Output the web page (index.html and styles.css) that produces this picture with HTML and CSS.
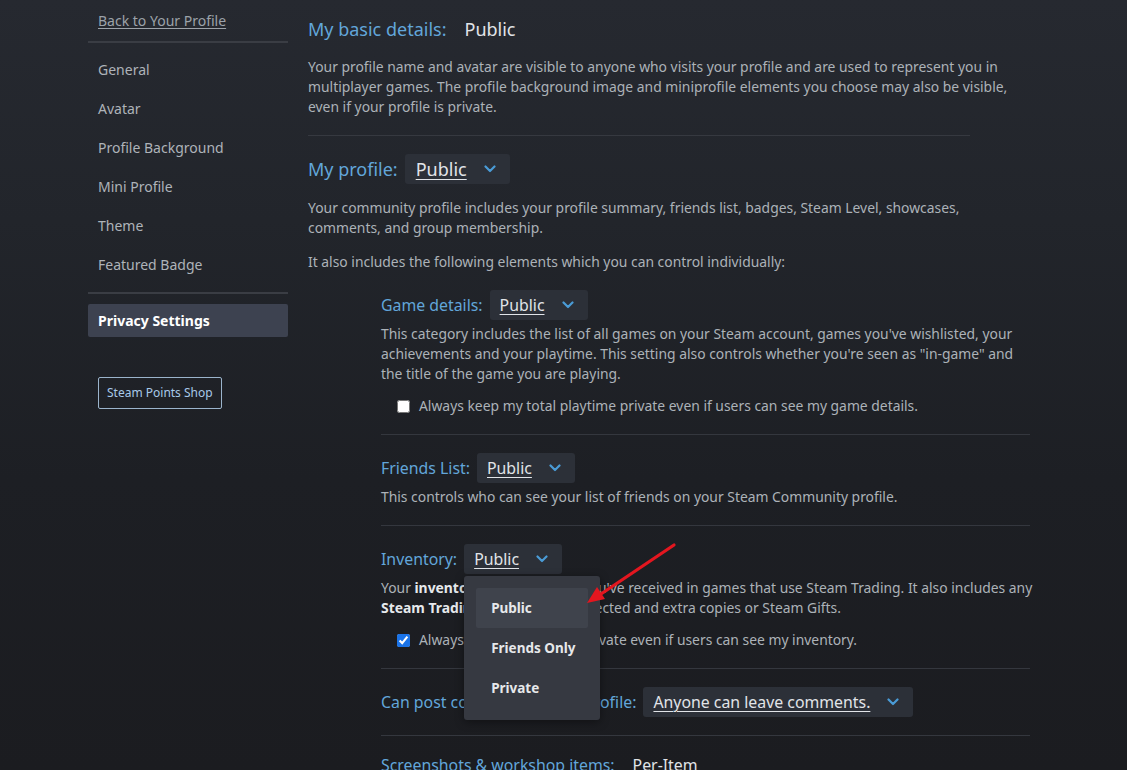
FILE: index.html
```html
<!DOCTYPE html>
<html lang="en">
<head>
<meta charset="utf-8">
<title>Privacy Settings</title>
<link rel="stylesheet" href="styles.css">
</head>
<body>
<div class="page">
  <aside class="sidebar">
    <a class="back-link" href="#">Back to Your Profile</a>
    <nav class="nav">
      <div class="nav-item">General</div>
      <div class="nav-item">Avatar</div>
      <div class="nav-item">Profile Background</div>
      <div class="nav-item">Mini Profile</div>
      <div class="nav-item">Theme</div>
      <div class="nav-item">Featured Badge</div>
    </nav>
    <div class="nav-active">Privacy Settings</div>
    <div class="shop-btn">Steam Points Shop</div>
  </aside>

  <main class="main">
    <div class="top-section">
      <div class="row head-row">
        <span class="label big">My basic details:</span>
        <span class="value big">Public</span>
      </div>
      <p class="desc">Your profile name and avatar are visible to anyone who visits your profile and are used to represent you in<br>multiplayer games. The profile background image and miniprofile elements you choose may also be visible,<br>even if your profile is private.</p>
    </div>

    <div class="profile-section">
      <div class="row">
        <span class="label big">My profile:</span>
        <span class="dropdown big"><span class="dd-text">Public</span><svg class="chev" viewBox="0 0 12 8" width="12" height="8"><path d="M1.5 1.5 L6 6 L10.5 1.5" fill="none" stroke="#4a9bd6" stroke-width="2.2" stroke-linecap="round" stroke-linejoin="round"/></svg></span>
      </div>
      <p class="desc gap14">Your community profile includes your profile summary, friends list, badges, Steam Level, showcases,<br>comments, and group membership.</p>
      <p class="desc gap14">It also includes the following elements which you can control individually:</p>

      <div class="subs">
        <div class="sub first">
          <div class="row">
            <span class="label">Game details:</span>
            <span class="dropdown"><span class="dd-text">Public</span><svg class="chev" viewBox="0 0 12 8" width="12" height="8"><path d="M1.5 1.5 L6 6 L10.5 1.5" fill="none" stroke="#4a9bd6" stroke-width="2.2" stroke-linecap="round" stroke-linejoin="round"/></svg></span>
          </div>
          <p class="desc gap4">This category includes the list of all games on your Steam account, games you've wishlisted, your<br>achievements and your playtime. This setting also controls whether you're seen as "in-game" and<br>the title of the game you are playing.</p>
          <label class="check"><input type="checkbox"><span>Always keep my total playtime private even if users can see my game details.</span></label>
        </div>

        <div class="sub">
          <div class="row">
            <span class="label">Friends List:</span>
            <span class="dropdown"><span class="dd-text">Public</span><svg class="chev" viewBox="0 0 12 8" width="12" height="8"><path d="M1.5 1.5 L6 6 L10.5 1.5" fill="none" stroke="#4a9bd6" stroke-width="2.2" stroke-linecap="round" stroke-linejoin="round"/></svg></span>
          </div>
          <p class="desc gap4">This controls who can see your list of friends on your Steam Community profile.</p>
        </div>

        <div class="sub">
          <div class="row">
            <span class="label">Inventory:</span>
            <span class="dropdown has-menu"><span class="dd-text">Public</span><svg class="chev" viewBox="0 0 12 8" width="12" height="8"><path d="M1.5 1.5 L6 6 L10.5 1.5" fill="none" stroke="#4a9bd6" stroke-width="2.2" stroke-linecap="round" stroke-linejoin="round"/></svg>
              <span class="menu">
                <span class="menu-item hover">Public</span>
                <span class="menu-item">Friends Only</span>
                <span class="menu-item">Private</span>
              </span>
            </span>
          </div>
          <p class="desc gap4">Your <b>inventory</b> includes items you've received in games that use Steam Trading. It also includes any<br><b>Steam Trading Cards</b> you've collected and extra copies or Steam Gifts.</p>
          <label class="check"><input type="checkbox" checked><span>Always keep Steam Gifts private even if users can see my inventory.</span></label>
        </div>

        <div class="sub">
          <div class="row">
            <span class="label">Can post comments on my profile:</span>
            <span class="dropdown"><span class="dd-text">Anyone can leave comments.</span><svg class="chev" viewBox="0 0 12 8" width="12" height="8"><path d="M1.5 1.5 L6 6 L10.5 1.5" fill="none" stroke="#4a9bd6" stroke-width="2.2" stroke-linecap="round" stroke-linejoin="round"/></svg></span>
          </div>
        </div>

        <div class="sub last">
          <div class="row">
            <span class="label">Screenshots &amp; workshop items:</span>
            <span class="value">Per-Item</span>
          </div>
        </div>
      </div>
    </div>
  </main>
</div>

<svg class="arrow" width="120" height="80" viewBox="0 0 120 80">
  <line x1="102" y1="5" x2="26" y2="56" stroke="#e3161f" stroke-width="3.2" stroke-linecap="round"/>
  <polygon points="15,63 25,47 33,59" fill="#e3161f"/>
</svg>
</body>
</html>
```

FILE: styles.css
```css
html, body {
  margin: 0;
  padding: 0;
}

body {
  width: 1127px;
  height: 770px;
  overflow: hidden;
  background: linear-gradient(180deg, #262930 0px, #22252b 220px, #1d1f24 480px, #1b1c20 770px);
  font-family: "Noto Sans", "Liberation Sans", sans-serif;
  font-size: 14px;
  color: #acb2b8;
  position: relative;
}

.page {
  display: flex;
  gap: 20px;
  padding-left: 88px;
}

/* Sidebar */
.sidebar {
  width: 200px;
  flex: none;
  display: flex;
  flex-direction: column;
}

.back-link {
  display: block;
  padding: 10px 10px 10px;
  line-height: 21px;
  color: #9ca2a9;
  text-decoration: underline;
  text-underline-offset: 2px;
  border-bottom: 2px solid #3a3d44;
}

.nav {
  padding: 7px 0 8px;
  border-bottom: 2px solid #3a3d44;
}

.nav-item {
  height: 39px;
  line-height: 39px;
  padding-left: 10px;
  color: #aeb3b9;
}

.nav-active {
  margin-top: 10px;
  height: 33px;
  line-height: 33px;
  padding-left: 10px;
  background: #3d4250;
  border-radius: 2px;
  color: #ffffff;
  font-weight: 700;
}

.shop-btn {
  align-self: flex-start;
  margin: 40px 0 0 10px;
  height: 30px;
  line-height: 30px;
  padding: 0 8px;
  border: 1px solid #9bb4cc;
  border-radius: 2px;
  font-size: 12px;
  color: #a8c9e8;
}

/* Main */
.main {
  width: 740px;
  flex: none;
}

.row {
  display: flex;
  align-items: center;
  gap: 7px;
}

.label {
  color: #62a6da;
  font-size: 15.85px;
}

.label.big {
  font-size: 18px;
}

.value {
  color: #e1e4e8;
  font-size: 15.85px;
  margin-left: 11px;
}

.value.big {
  font-size: 18px;
}

.top-section {
  padding-top: 16px;
  padding-bottom: 18px;
  width: 662px;
  border-bottom: 1px solid #363940;
}

.head-row {
  height: 26px;
}

.desc {
  margin: 15px 0 0;
  font-size: 13.88px;
  line-height: 20px;
  color: #acb2b8;
  white-space: nowrap;
}

.desc b {
  color: #e6e9ec;
  font-weight: 700;
}

.desc.gap14 { margin-top: 14px; }
.desc.gap4 { margin-top: 4px; }

.profile-section {
  padding-top: 18px;
}

.dropdown {
  position: relative;
  display: inline-flex;
  align-items: center;
  gap: 17px;
  height: 30px;
  padding: 0 14px 0 10px;
  background: #2c3038;
  border-radius: 3px;
  color: #e1e4e8;
  font-size: 15.85px;
}

.dropdown.big {
  font-size: 18px;
  padding-left: 11px;
}

.dd-text {
  text-decoration: underline;
  text-underline-offset: 3px;
  text-decoration-thickness: 1px;
}

.chev {
  display: block;
}

.subs {
  margin-left: 73px;
  margin-top: 18px;
  width: 649px;
}

.sub {
  padding: 18px 0 18px;
  border-bottom: 1px solid #34373e;
}

.sub.first {
  padding-top: 0;
}

.sub.last {
  border-bottom: none;
}

.check {
  display: flex;
  align-items: center;
  gap: 9px;
  margin-top: 12px;
  padding-left: 16px;
  line-height: 20px;
  font-size: 13.88px;
  color: #acb2b8;
}

.check input {
  margin: 0;
  width: 13px;
  height: 13px;
  accent-color: #1a73e8;
}

/* Dropdown menu */
.menu {
  position: absolute;
  left: 0;
  top: 32px;
  z-index: 5;
  width: 112px;
  padding: 12px 12px;
  background: #363941;
  border-radius: 3px;
  box-shadow: 0 2px 10px rgba(0, 0, 0, 0.4);
  display: flex;
  flex-direction: column;
}

.menu-item {
  height: 40px;
  line-height: 40px;
  padding-left: 15px;
  font-size: 13.5px;
  font-weight: 700;
  color: #e6e8ea;
  border-radius: 2px;
  white-space: nowrap;
}

.menu-item.hover {
  background: #3f434c;
}

/* Annotation arrow */
.arrow {
  position: absolute;
  left: 572px;
  top: 540px;
  z-index: 10;
  overflow: visible;
}
```
